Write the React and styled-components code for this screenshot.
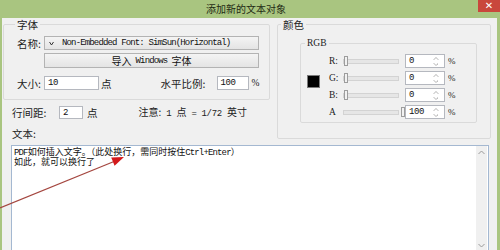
import React from "react";
import styled, { createGlobalStyle } from "styled-components";

const GREEN = "#a9c580";
const CJK = `"Noto Sans CJK SC", "Noto Sans", sans-serif`;
const MONO = `"Liberation Mono", "DejaVu Sans Mono", monospace`;

const Global = createGlobalStyle`
  html, body { margin: 0; padding: 0; background: #f0f0f0; }
  body { font-family: ${CJK}; }
  * { box-sizing: border-box; }
`;

const Window = styled.div`
  position: relative;
  width: 500px;
  height: 250px;
  overflow: hidden;
  display: flex;
  flex-direction: column;
  background: ${GREEN};
`;

const TitleBar = styled.div`
  flex: none;
  height: 18px;
  display: grid;
  grid-template-columns: 1fr auto 1fr;
  background: ${GREEN};
`;

const Title = styled.div`
  grid-column: 2;
  padding-right: 8px;
  font-size: 10px;
  line-height: 17px;
  color: #1f2a14;
`;

const CloseButton = styled.div`
  grid-column: 3;
  justify-self: end;
  width: 22px;
  height: 12px;
  background: #c9473c;
  color: #fff;
  font-family: "DejaVu Sans", sans-serif;
  font-size: 10px;
  font-weight: bold;
  line-height: 12px;
  text-align: center;
`;

const Frame = styled.div`
  flex: 1;
  min-height: 0;
  margin: 0 3px 0 2px;
  background: #f0f0f0;
  display: flex;
  flex-direction: column;
  overflow: hidden;
`;

const TopRow = styled.div`
  display: flex;
  gap: 7px;
  padding: 1px 0 0 1px;
`;

const LeftCol = styled.div`
  width: 267px;
  display: flex;
  flex-direction: column;
`;

const Group = styled.fieldset`
  margin: 0;
  min-width: 0;
  border: 1px solid #dadada;
  border-radius: 2px;
  padding: ${(p) => p.$pad};
  width: ${(p) => p.$w}px;
  margin-left: ${(p) => p.$ml || 0}px;
`;

const Legend = styled.legend`
  margin-left: -2px;
  padding: 0 2px;
  font-family: ${(p) => (p.$serif ? `"Liberation Serif", serif` : CJK)};
  font-size: ${(p) => (p.$serif ? "9.5px" : "10.5px")};
  line-height: ${(p) => (p.$serif ? "10px" : "11px")};
  color: #222;
`;

const Row = styled.div`
  display: flex;
  align-items: center;
  height: ${(p) => p.$h || 14}px;
  margin-top: ${(p) => p.$mt || 0}px;
  padding-left: ${(p) => p.$pl || 0}px;
`;

const Label = styled.span`
  flex: none;
  width: ${(p) => (p.$w ? `${p.$w}px` : "auto")};
  margin-left: ${(p) => p.$ml || 0}px;
  font-size: 10.5px;
  line-height: 11px;
  color: #222;
  white-space: nowrap;
`;

const Mono = styled.span`
  font-family: ${MONO};
  font-size: ${(p) => p.$size || 9}px;
  letter-spacing: ${(p) => p.$ls ?? -0.85}px;
  line-height: 10px;
`;

const Dropdown = styled.div`
  width: 215px;
  height: 14px;
  display: flex;
  align-items: center;
  gap: 8px;
  padding-left: 4px;
  border: 1px solid #b3b3b3;
  background: linear-gradient(#f4f4f4, #e4e4e4);
  color: #111;
  white-space: nowrap;
`;

const PushButton = styled.div`
  width: 215px;
  height: 15px;
  margin-left: 27px;
  margin-top: 3px;
  border: 1px solid #b3b3b3;
  background: linear-gradient(#f4f4f4, #e4e4e4);
  display: flex;
  align-items: center;
  justify-content: center;
  gap: 4px;
  font-size: 10px;
  line-height: 11px;
  color: #111;
`;

const TextInput = styled.div`
  flex: none;
  width: ${(p) => p.$w}px;
  height: ${(p) => p.$h || 14}px;
  border: 1px solid #b5b8bf;
  background: #fff;
  padding-left: 3px;
  display: flex;
  align-items: center;
  font-family: ${MONO};
  font-size: 9px;
  letter-spacing: -0.4px;
  color: #111;
`;

const Unit = styled.span`
  flex: none;
  margin-left: ${(p) => p.$ml || 0}px;
  font-family: ${(p) => (p.$serif ? `"Liberation Serif", serif` : CJK)};
  font-size: ${(p) => (p.$serif ? "9.5px" : "10.5px")};
  line-height: 11px;
  color: #222;
`;

const Note = styled.span`
  margin-left: 41px;
  display: flex;
  align-items: baseline;
  gap: 5px;
  font-size: 10px;
  line-height: 11px;
  color: #222;
  white-space: nowrap;
`;

const RgbBody = styled.div`
  display: flex;
  align-items: flex-start;
`;

const Swatch = styled.div`
  flex: none;
  width: 13px;
  height: 13px;
  margin-top: 21px;
  margin-right: 9px;
  background: #000;
  border: 1px solid #7a7a7a;
`;

const ChannelGrid = styled.div`
  display: grid;
  grid-template-columns: 14px 62px 40px auto;
  row-gap: 3px;
  grid-auto-rows: 14px;
  align-items: center;
`;

const ChannelLabel = styled.span`
  font-family: "Liberation Serif", serif;
  font-size: 9.5px;
  color: #222;
`;

const SliderTrack = styled.div`
  position: relative;
  height: 14px;
  margin-right: 6px;
  &::before {
    content: "";
    position: absolute;
    left: 0;
    right: 0;
    top: 5px;
    height: 3px;
    background: #e6e6e6;
    border: 1px solid #d3d3d3;
  }
`;

const SliderThumb = styled.div`
  position: absolute;
  top: 2px;
  width: 4px;
  height: 10px;
  background: #f2f2f2;
  border: 1px solid #9d9d9d;
`;

const Spin = styled.div`
  height: 14px;
  border: 1px solid #b5b8bf;
  background: #fff;
  display: flex;
  align-items: center;
  justify-content: space-between;
  padding: 0 5px 0 3px;
  font-family: ${MONO};
  font-size: 9px;
  letter-spacing: -0.4px;
  color: #111;
`;

const Percent = styled.span`
  margin-left: 3px;
  font-family: "Liberation Serif", serif;
  font-size: 9px;
  color: #222;
`;

const TextLabel = styled.div`
  margin-top: 9px;
  padding-left: 9px;
  font-size: 10.5px;
  line-height: 11px;
  color: #222;
`;

const TextBox = styled.div`
  flex: none;
  height: 107px;
  margin: 6px 8px 0 9px;
  border: 1px solid #a4b8d1;
  background: #fff;
  display: flex;
`;

const TextContent = styled.div`
  flex: 1;
  padding: 1px 2px;
  font-size: 9px;
  color: #111;
  white-space: nowrap;
`;

const TextLine = styled.div`
  height: 10px;
  line-height: 10px;
`;

const ScrollBar = styled.div`
  flex: none;
  width: 11px;
  margin: 0 1px 0 0;
  background: #f0f0f0;
  display: flex;
  flex-direction: column;
  justify-content: space-between;
  align-items: center;
  padding: 4px 0 3px;
`;

const Overlay = styled.svg`
  position: absolute;
  left: 0;
  top: 0;
  pointer-events: none;
`;

const SpinArrows = () => (
  <svg width="6" height="11" viewBox="0 0 6 11">
    <path d="M1 3.5 L3 1.5 L5 3.5" fill="none" stroke="#666" strokeWidth="0.9" strokeDasharray="1 0.6" />
    <path d="M1 7.5 L3 9.5 L5 7.5" fill="none" stroke="#666" strokeWidth="0.9" strokeDasharray="1 0.6" />
  </svg>
);

const Chevron = ({ up }) => (
  <svg width="7" height="5" viewBox="0 0 7 5">
    <path d={up ? "M0.5 4 L3.5 1 L6.5 4" : "M0.5 1 L3.5 4 L6.5 1"} fill="none" stroke="#9a9a9a" strokeWidth="1" />
  </svg>
);

const channels = [
  { name: "R:", value: 0 },
  { name: "G:", value: 0 },
  { name: "B:", value: 0 },
  { name: "A", value: 100 },
];

export default function App() {
  return (
    <>
      <Global />
      <Window>
        <TitleBar>
          <Title>添加新的文本对象</Title>
          <CloseButton>✕</CloseButton>
        </TitleBar>
        <Frame>
          <TopRow>
            <LeftCol>
              <Group $w={267} $pad="6px 10px 9px 13px">
                <Legend>字体</Legend>
                <Row>
                  <Label $w={27}>名称:</Label>
                  <Dropdown>
                    <svg width="5" height="5" viewBox="0 0 5 5">
                      <path d="M0.5 1 L2.5 4 L4.5 1" fill="none" stroke="#222" strokeWidth="0.9" />
                    </svg>
                    <Mono>Non-Embedded Font: SimSun(Horizontal)</Mono>
                  </Dropdown>
                </Row>
                <PushButton>
                  <span>导入</span>
                  <Mono>Windows</Mono>
                  <span>字体</span>
                </PushButton>
                <Row $mt={8}>
                  <Label $w={27}>大小:</Label>
                  <TextInput $w={55}>10</TextInput>
                  <Unit $ml={2}>点</Unit>
                  <Label $w={56} $ml={49}>水平比例:</Label>
                  <TextInput $w={32}>100</TextInput>
                  <Unit $ml={3} $serif>%</Unit>
                </Row>
              </Group>
              <Row $mt={6} $h={13} $pl={9}>
                <Label $w={47}>行间距:</Label>
                <TextInput $w={24} $h={13}>2</TextInput>
                <Unit $ml={4}>点</Unit>
                <Note>
                  <span>注意:</span>
                  <Mono $ls={-0.3}>1</Mono>
                  <span>点</span>
                  <Mono $ls={-0.3}>=</Mono>
                  <Mono $ls={-0.3}>1/72</Mono>
                  <span>英寸</span>
                </Note>
              </Row>
              <TextLabel>文本:</TextLabel>
            </LeftCol>
            <Group $w={214} $pad="8px 13px 15px 5px">
              <Legend>颜色</Legend>
              <Group $w={177} $ml={17} $pad="6px 0 3px 6px">
                <Legend $serif>RGB</Legend>
                <RgbBody>
                  <Swatch />
                  <ChannelGrid>
                    {channels.map((c) => (
                      <React.Fragment key={c.name}>
                        <ChannelLabel>{c.name}</ChannelLabel>
                        <SliderTrack>
                          <SliderThumb style={{ left: `${1 + (c.value / 100) * 57}px` }} />
                        </SliderTrack>
                        <Spin>
                          <span>{c.value}</span>
                          <SpinArrows />
                        </Spin>
                        <Percent>%</Percent>
                      </React.Fragment>
                    ))}
                  </ChannelGrid>
                </RgbBody>
              </Group>
            </Group>
          </TopRow>
          <TextBox>
            <TextContent>
              <TextLine>
                <Mono>PDF</Mono>如何插入文字。（此处换行，需同时按住<Mono>Ctrl+Enter</Mono>）
              </TextLine>
              <TextLine>如此，就可以换行了</TextLine>
            </TextContent>
            <ScrollBar>
              <Chevron up />
              <Chevron />
            </ScrollBar>
          </TextBox>
        </Frame>
        <Overlay width="500" height="250" viewBox="0 0 500 250">
          <line x1="0" y1="208" x2="114" y2="161.5" stroke="#a4463f" strokeWidth="1.2" />
          <polygon points="124,157 111.2,157.4 114.6,165.7" fill="#d3191b" />
        </Overlay>
      </Window>
    </>
  );
}
